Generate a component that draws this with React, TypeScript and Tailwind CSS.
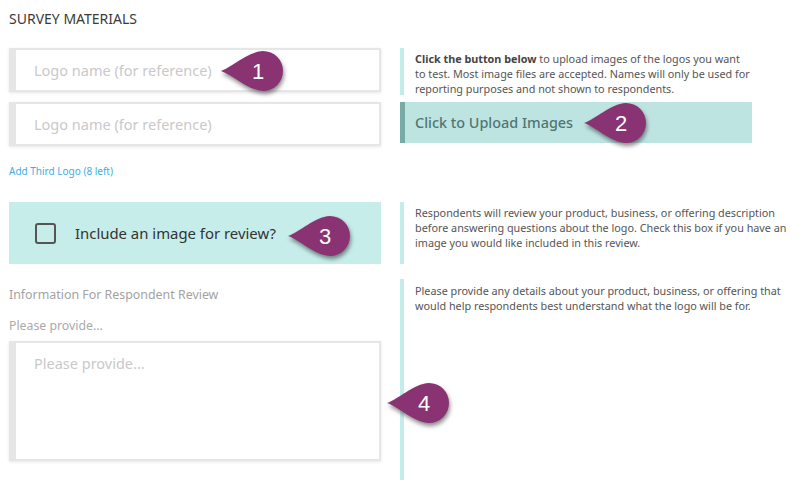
const font = { fontFamily: '"Noto Sans", "Open Sans", sans-serif' };

function Callout({ n, className }: { n: string; className: string }) {
  return (
    <div className={`absolute w-[62px] h-[40px] ${className}`}>
      <svg width="62" height="40" viewBox="0 0 62 40" className="absolute inset-0 overflow-visible drop-shadow-[1px_3px_2px_rgba(0,0,0,0.45)]">
        <path d="M0 20 C12 16 26 1 42 0 A20 20 0 0 1 42 40 C26 39 12 24 0 20 Z" fill="#8a3373" />
      </svg>
      <span className="absolute left-[27px] w-[20px] top-0 h-[40px] flex items-center justify-center text-white text-[22px] font-['Liberation_Sans',sans-serif]">{n}</span>
    </div>
  );
}

function Field({ text, tall }: { text: string; tall?: boolean }) {
  return (
    <div className={`w-[372px] border-2 border-l-[7px] border-[#e6e6e6] bg-white shadow-[0_1px_3px_rgba(0,0,0,0.1)] pl-[18px] text-[14.5px] text-[#c9c9c9] ${tall ? 'h-[120px] pt-[10px] leading-[20px]' : 'h-[44px] pt-[2px] flex items-center'}`}>
      {text}
    </div>
  );
}

export default function App() {
  return (
    <div className="relative w-[799px] h-[484px] overflow-hidden bg-white pl-[9px]" style={font}>
      <h1 className="h-[48px] pt-[9px] text-[14px] leading-[19px] text-[#3a3a3a] font-normal">SURVEY MATERIALS</h1>

      <section className="flex gap-[19px] h-[154px]">
        <div className="w-[372px] flex flex-col gap-[10px]">
          <Field text="Logo name (for reference)" />
          <Field text="Logo name (for reference)" />
          <a className="mt-[8px] text-[10px] leading-[14px] text-[#41ade4]">Add Third Logo (8 left)</a>
        </div>
        <div className="w-[352px] flex flex-col gap-[7px]">
          <p className="h-[47px] border-l-[4px] border-[#c4edea] pl-[11px] pt-[3px] text-[10.8px] leading-[15px] text-[#555] whitespace-nowrap">
            <b className="font-bold text-[#444]">Click the button below</b> to upload images of the logos you want<br />
            to test. Most image files are accepted. Names will only be used for<br />
            reporting purposes and not shown to respondents.
          </p>
          <button className="h-[41px] border-l-[5px] border-[#76aba6] bg-[#bee4e1] pl-[10px] text-left text-[14.4px] font-medium text-[#4f7674]">Click to Upload Images</button>
        </div>
      </section>

      <section className="flex gap-[19px] h-[77px]">
        <label className="w-[372px] h-[62px] bg-[#c6edea] flex items-center pl-[26px] gap-[19px] text-[14.9px] text-[#333]">
          <span className="w-[21px] h-[21px] rounded-[3px] border-2 border-[#555] shrink-0" />
          Include an image for review?
        </label>
        <p className="w-[390px] h-[62px] border-l-[4px] border-[#c4edea] pl-[11px] pt-[3px] text-[10.8px] leading-[15px] text-[#555] whitespace-nowrap">
          Respondents will review your product, business, or offering description<br />
          before answering questions about the logo. Check this box if you have an<br />
          image you would like included in this review.
        </p>
      </section>

      <section className="flex gap-[19px] h-[201px]">
        <div className="w-[372px] flex flex-col">
          <div className="pt-[8px] h-[36px] text-[12.4px] leading-[16px] text-[#a3a3a3]">Information For Respondent Review</div>
          <div className="h-[26px] pt-[3px] text-[12.3px] leading-[16px] text-[#aaa]">Please provide...</div>
          <Field text="Please provide..." tall />
        </div>
        <p className="w-[390px] border-l-[4px] border-[#c4edea] pl-[11px] pt-[4px] text-[10.8px] leading-[15px] text-[#555] whitespace-nowrap">
          Please provide any details about your product, business, or offering that<br />
          would help respondents best understand what the logo will be for.
        </p>
      </section>

      <Callout n="1" className="left-[221px] top-[51px]" />
      <Callout n="2" className="left-[584px] top-[103px]" />
      <Callout n="3" className="left-[288px] top-[216px]" />
      <Callout n="4" className="left-[387px] top-[383px]" />
    </div>
  );
}
